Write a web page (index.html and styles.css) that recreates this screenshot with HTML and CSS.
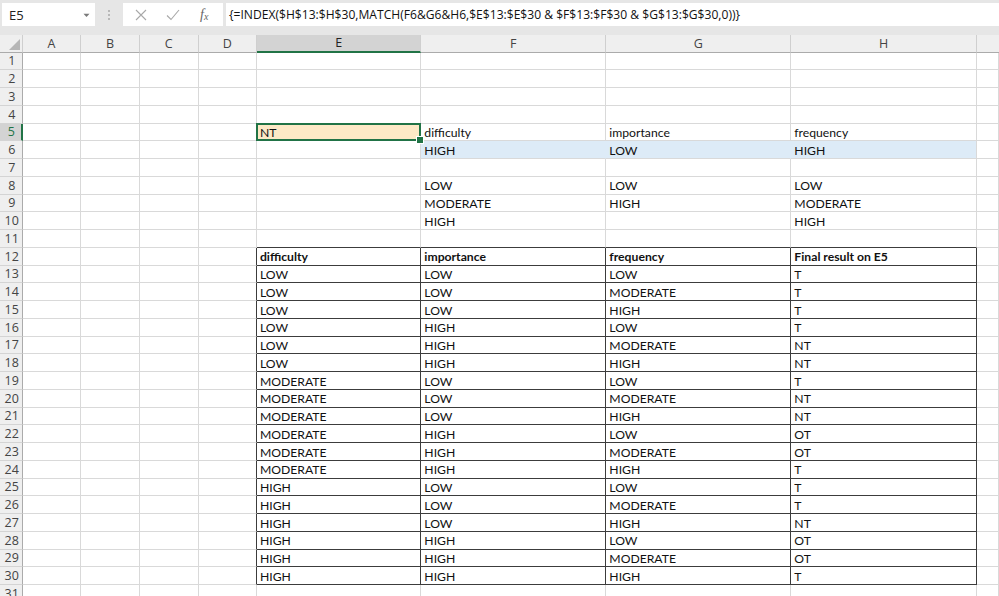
FILE: index.html
```html
<!DOCTYPE html>
<html>
<head>
<meta charset="utf-8">
<link rel="stylesheet" href="styles.css">
</head>
<body>
<div class="topbar">
  <div class="namebox"><span class="ref">E5</span><svg class="dd" width="7" height="5" viewBox="0 0 7 5"><path d="M0.5 0.8 L3.5 4 L6.5 0.8 Z" fill="#7a7a7a"/></svg></div>
  <div class="dots"><i></i><i></i><i></i></div>
  <div class="fxbox">
    <svg class="ic" width="12" height="12" viewBox="0 0 12 12"><path d="M1 1 L11 11 M11 1 L1 11" stroke="#a8a8a8" stroke-width="1.1" fill="none"/></svg>
    <svg class="ic" width="14" height="12" viewBox="0 0 14 12"><path d="M1 6.5 L5 10.5 L13 1" stroke="#a8a8a8" stroke-width="1.1" fill="none"/></svg>
    <span class="fx">f<sub>x</sub></span>
  </div>
  <div class="formula">{=INDEX($H$13:$H$30,MATCH(F6&amp;G6&amp;H6,$E$13:$E$30 &amp; $F$13:$F$30 &amp; $G$13:$G$30,0))}</div>
</div>
<div class="sheet">
  <div class="row"><div class="ch corner"><svg width="11" height="11" viewBox="0 0 11 11"><path d="M11 0 L11 11 L0 11 Z" fill="#b6b6b6"/></svg></div><div class="ch">A</div><div class="ch">B</div><div class="ch">C</div><div class="ch">D</div><div class="ch sel">E</div><div class="ch">F</div><div class="ch">G</div><div class="ch">H</div><div class="ch last"></div></div>

  <div class="row"><div class="rh">1</div><div class="c"></div><div class="c"></div><div class="c"></div><div class="c"></div><div class="c"></div><div class="c"></div><div class="c"></div><div class="c"></div><div class="c"></div></div>
  <div class="row"><div class="rh">2</div><div class="c"></div><div class="c"></div><div class="c"></div><div class="c"></div><div class="c"></div><div class="c"></div><div class="c"></div><div class="c"></div><div class="c"></div></div>
  <div class="row"><div class="rh">3</div><div class="c"></div><div class="c"></div><div class="c"></div><div class="c"></div><div class="c"></div><div class="c"></div><div class="c"></div><div class="c"></div><div class="c"></div></div>
  <div class="row"><div class="rh">4</div><div class="c"></div><div class="c"></div><div class="c"></div><div class="c"></div><div class="c"></div><div class="c"></div><div class="c"></div><div class="c"></div><div class="c"></div></div>
  <div class="row"><div class="rh rsel">5</div><div class="c"></div><div class="c"></div><div class="c"></div><div class="c"></div><div class="c active">NT</div><div class="c">difficulty</div><div class="c">importance</div><div class="c">frequency</div><div class="c"></div></div>
  <div class="row"><div class="rh">6</div><div class="c"></div><div class="c"></div><div class="c"></div><div class="c"></div><div class="c"></div><div class="c blue">HIGH</div><div class="c blue">LOW</div><div class="c blue">HIGH</div><div class="c"></div></div>
  <div class="row"><div class="rh">7</div><div class="c"></div><div class="c"></div><div class="c"></div><div class="c"></div><div class="c"></div><div class="c"></div><div class="c"></div><div class="c"></div><div class="c"></div></div>
  <div class="row"><div class="rh">8</div><div class="c"></div><div class="c"></div><div class="c"></div><div class="c"></div><div class="c"></div><div class="c">LOW</div><div class="c">LOW</div><div class="c">LOW</div><div class="c"></div></div>
  <div class="row"><div class="rh">9</div><div class="c"></div><div class="c"></div><div class="c"></div><div class="c"></div><div class="c"></div><div class="c">MODERATE</div><div class="c">HIGH</div><div class="c">MODERATE</div><div class="c"></div></div>
  <div class="row"><div class="rh">10</div><div class="c"></div><div class="c"></div><div class="c"></div><div class="c"></div><div class="c"></div><div class="c">HIGH</div><div class="c"></div><div class="c">HIGH</div><div class="c"></div></div>
  <div class="row"><div class="rh">11</div><div class="c"></div><div class="c"></div><div class="c"></div><div class="c"></div><div class="c tb"></div><div class="c tb"></div><div class="c tb"></div><div class="c tb"></div><div class="c"></div></div>
  <div class="row"><div class="rh">12</div><div class="c"></div><div class="c"></div><div class="c"></div><div class="c tl"></div><div class="c t b">difficulty</div><div class="c t b">importance</div><div class="c t b">frequency</div><div class="c t b">Final result on E5</div><div class="c"></div></div>
  <div class="row"><div class="rh">13</div><div class="c"></div><div class="c"></div><div class="c"></div><div class="c tl"></div><div class="c t">LOW</div><div class="c t">LOW</div><div class="c t">LOW</div><div class="c t">T</div><div class="c"></div></div>
  <div class="row"><div class="rh">14</div><div class="c"></div><div class="c"></div><div class="c"></div><div class="c tl"></div><div class="c t">LOW</div><div class="c t">LOW</div><div class="c t">MODERATE</div><div class="c t">T</div><div class="c"></div></div>
  <div class="row"><div class="rh">15</div><div class="c"></div><div class="c"></div><div class="c"></div><div class="c tl"></div><div class="c t">LOW</div><div class="c t">LOW</div><div class="c t">HIGH</div><div class="c t">T</div><div class="c"></div></div>
  <div class="row"><div class="rh">16</div><div class="c"></div><div class="c"></div><div class="c"></div><div class="c tl"></div><div class="c t">LOW</div><div class="c t">HIGH</div><div class="c t">LOW</div><div class="c t">T</div><div class="c"></div></div>
  <div class="row"><div class="rh">17</div><div class="c"></div><div class="c"></div><div class="c"></div><div class="c tl"></div><div class="c t">LOW</div><div class="c t">HIGH</div><div class="c t">MODERATE</div><div class="c t">NT</div><div class="c"></div></div>
  <div class="row"><div class="rh">18</div><div class="c"></div><div class="c"></div><div class="c"></div><div class="c tl"></div><div class="c t">LOW</div><div class="c t">HIGH</div><div class="c t">HIGH</div><div class="c t">NT</div><div class="c"></div></div>
  <div class="row"><div class="rh">19</div><div class="c"></div><div class="c"></div><div class="c"></div><div class="c tl"></div><div class="c t">MODERATE</div><div class="c t">LOW</div><div class="c t">LOW</div><div class="c t">T</div><div class="c"></div></div>
  <div class="row"><div class="rh">20</div><div class="c"></div><div class="c"></div><div class="c"></div><div class="c tl"></div><div class="c t">MODERATE</div><div class="c t">LOW</div><div class="c t">MODERATE</div><div class="c t">NT</div><div class="c"></div></div>
  <div class="row"><div class="rh">21</div><div class="c"></div><div class="c"></div><div class="c"></div><div class="c tl"></div><div class="c t">MODERATE</div><div class="c t">LOW</div><div class="c t">HIGH</div><div class="c t">NT</div><div class="c"></div></div>
  <div class="row"><div class="rh">22</div><div class="c"></div><div class="c"></div><div class="c"></div><div class="c tl"></div><div class="c t">MODERATE</div><div class="c t">HIGH</div><div class="c t">LOW</div><div class="c t">OT</div><div class="c"></div></div>
  <div class="row"><div class="rh">23</div><div class="c"></div><div class="c"></div><div class="c"></div><div class="c tl"></div><div class="c t">MODERATE</div><div class="c t">HIGH</div><div class="c t">MODERATE</div><div class="c t">OT</div><div class="c"></div></div>
  <div class="row"><div class="rh">24</div><div class="c"></div><div class="c"></div><div class="c"></div><div class="c tl"></div><div class="c t">MODERATE</div><div class="c t">HIGH</div><div class="c t">HIGH</div><div class="c t">T</div><div class="c"></div></div>
  <div class="row"><div class="rh">25</div><div class="c"></div><div class="c"></div><div class="c"></div><div class="c tl"></div><div class="c t">HIGH</div><div class="c t">LOW</div><div class="c t">LOW</div><div class="c t">T</div><div class="c"></div></div>
  <div class="row"><div class="rh">26</div><div class="c"></div><div class="c"></div><div class="c"></div><div class="c tl"></div><div class="c t">HIGH</div><div class="c t">LOW</div><div class="c t">MODERATE</div><div class="c t">T</div><div class="c"></div></div>
  <div class="row"><div class="rh">27</div><div class="c"></div><div class="c"></div><div class="c"></div><div class="c tl"></div><div class="c t">HIGH</div><div class="c t">LOW</div><div class="c t">HIGH</div><div class="c t">NT</div><div class="c"></div></div>
  <div class="row"><div class="rh">28</div><div class="c"></div><div class="c"></div><div class="c"></div><div class="c tl"></div><div class="c t">HIGH</div><div class="c t">HIGH</div><div class="c t">LOW</div><div class="c t">OT</div><div class="c"></div></div>
  <div class="row"><div class="rh">29</div><div class="c"></div><div class="c"></div><div class="c"></div><div class="c tl"></div><div class="c t">HIGH</div><div class="c t">HIGH</div><div class="c t">MODERATE</div><div class="c t">OT</div><div class="c"></div></div>
  <div class="row"><div class="rh">30</div><div class="c"></div><div class="c"></div><div class="c"></div><div class="c tl"></div><div class="c t">HIGH</div><div class="c t">HIGH</div><div class="c t">HIGH</div><div class="c t">T</div><div class="c"></div></div>
  <div class="row"><div class="rh">31</div><div class="c"></div><div class="c"></div><div class="c"></div><div class="c"></div><div class="c"></div><div class="c"></div><div class="c"></div><div class="c"></div><div class="c"></div></div>
</div>
</body>
</html>
```
FILE: styles.css
```css
* { box-sizing: border-box; }
html, body { margin: 0; padding: 0; }
body {
  width: 999px;
  height: 596px;
  overflow: hidden;
  background: #ffffff;
  font-family: "Open Sans", "Noto Sans", sans-serif;
}
.topbar {
  height: 35px;
  background: #e6e6e6;
  display: flex;
  align-items: flex-start;
  padding-top: 3px;
}
.namebox {
  margin-left: 2px;
  width: 93px;
  height: 23px;
  background: #fff;
  display: flex;
  align-items: center;
  justify-content: space-between;
  padding: 0 5px 0 7px;
}
.ref { font-size: 13px; color: #222; }
.dd { margin-top: 1px; }
.dots {
  width: 28px;
  height: 23px;
  display: flex;
  flex-direction: column;
  align-items: center;
  justify-content: center;
  gap: 2px;
}
.dots i {
  display: block;
  width: 2px;
  height: 2px;
  background: #b8b8b8;
}
.fxbox {
  width: 100px;
  height: 23px;
  background: #fff;
  display: flex;
  align-items: center;
  padding-left: 12px;
  gap: 19px;
}
.fx {
  font-family: "Liberation Serif", serif;
  font-style: italic;
  font-size: 14px;
  color: #666;
  margin-left: 1px;
}
.fx sub { font-size: 10px; vertical-align: -1px; }
.formula {
  flex: 1;
  height: 23px;
  margin-left: 3px;
  background: #fff;
  padding-left: 3px;
  font-size: 12.1px;
  line-height: 23px;
  color: #111;
  white-space: nowrap;
  overflow: hidden;
}
.sheet {
  display: grid;
  grid-template-columns: 22.5px 58.7px 58.7px 58.7px 58.4px 164.4px 185px 185px 185.3px 1fr;
  grid-template-rows: 17.5px;
  grid-auto-rows: 17.75px;
}
.row { display: contents; }
.ch {
  background: #efefef;
  border-right: 1px solid #cfcfcf;
  border-bottom: 1px solid #ababab;
  font-size: 12.5px;
  color: #444;
  display: flex;
  align-items: center;
  justify-content: center;
}
.ch.corner { justify-content: flex-end; align-items: flex-end; padding: 0 2px 2px 0; }
.ch.sel { background: #d3d3d3; border-bottom: 2px solid #217346; color: #222; }
.ch.last { border-right: none; }
.rh {
  background: #efefef;
  border-right: 1px solid #ababab;
  border-bottom: 1px solid #d4d4d4;
  font-size: 12.5px;
  color: #444;
  display: flex;
  align-items: center;
  justify-content: center;
  padding-left: 2px;
}
.rh.rsel { background: #d3d3d3; color: #217346; border-right: 2px solid #217346; }
.c {
  border-right: 1px solid #d9d9d9;
  border-bottom: 1px solid #d9d9d9;
  font-family: "Lato", sans-serif;
  font-size: 12.2px;
  line-height: 16px;
  padding: 1.5px 0 0 3px;
  color: #111;
  white-space: nowrap;
}
.c.blue { background: #ddebf7; border-right-color: #ddebf7; }
.c.blue:nth-child(9) { border-right-color: #d9d9d9; }
.c.active {
  background: #fde9c6;
  position: relative;
}
.c.active::after {
  content: "";
  position: absolute;
  left: -1px;
  top: -1px;
  right: -1px;
  bottom: -1px;
  border: 2px solid #217346;
}
.c.active::before {
  content: "";
  position: absolute;
  right: -4px;
  bottom: -4px;
  width: 6px;
  height: 6px;
  background: #217346;
  border: 1px solid #fff;
  z-index: 2;
}
.c.tb { border-bottom-color: #3c3c3c; }
.c.tl { border-right-color: #3c3c3c; }
.c.t { border-right-color: #3c3c3c; border-bottom-color: #3c3c3c; }
.c.b { font-weight: bold; }
```
